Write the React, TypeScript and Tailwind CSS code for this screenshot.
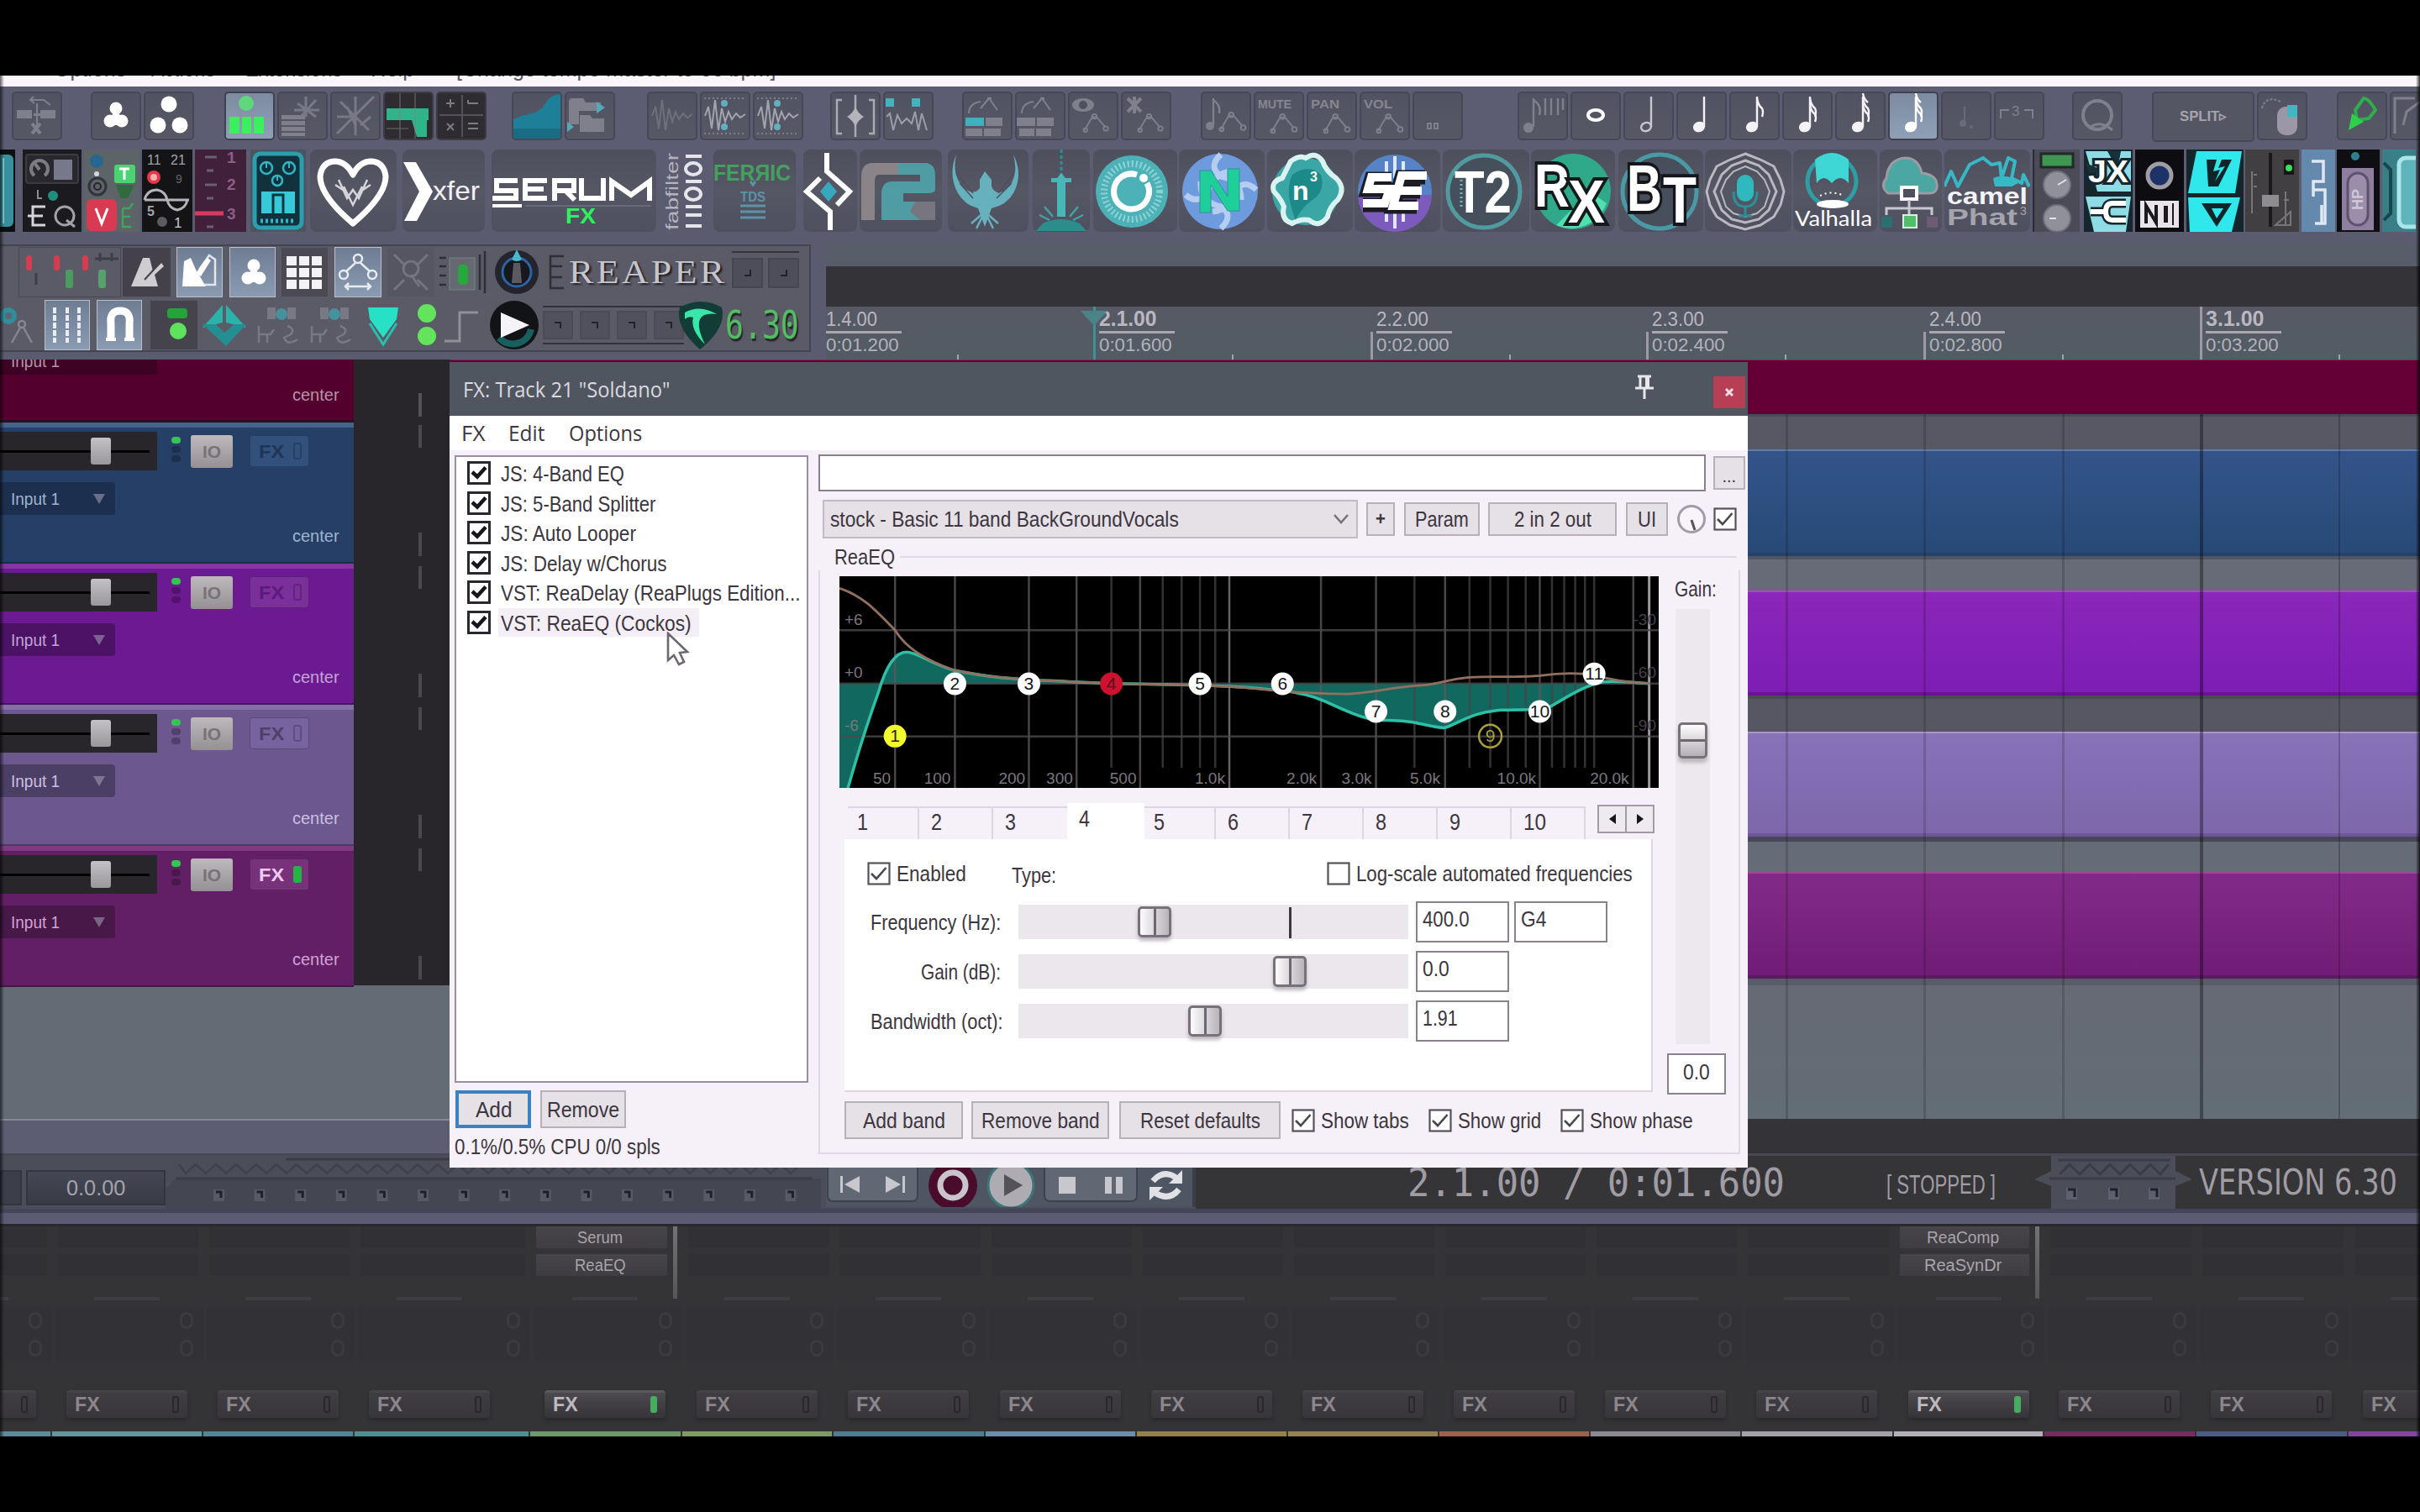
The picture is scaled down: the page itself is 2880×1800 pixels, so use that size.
import { useLayoutEffect, useRef, useState, type ReactNode } from "react";

/* Text squeezed or stretched horizontally to an exact width. */
function Fit({ w, c = "", children }: { w: number; c?: string; children: ReactNode }) {
  const ref = useRef<HTMLSpanElement>(null);
  const [s, setS] = useState(1);
  useLayoutEffect(() => {
    if (ref.current) setS(w / ref.current.offsetWidth);
  }, [w]);
  return (
    <span className={"inline-flex shrink-0 items-center " + c} style={{ width: w }}>
      <span ref={ref} className="inline-block origin-left whitespace-nowrap" style={{ transform: `scaleX(${s})` }}>
        {children}
      </span>
    </span>
  );
}

/* ---------- top toolbar ---------- */
function B({ on, dark, c = "w-[60px]", children }: { on?: boolean; dark?: boolean; c?: string; children?: ReactNode }) {
  const bg = on
    ? "bg-linear-to-b from-[#7d8ba0] to-[#8fa0b6] border-[#3f4350]"
    : dark
      ? "bg-[#2f2c31] border-[#3d3b45]"
      : "bg-linear-to-b from-[#525362] to-[#575866] border-[#474857]";
  return (
    <div className={"flex h-[58px] shrink-0 items-center justify-center overflow-hidden rounded-[5px] border-2 " + bg + " " + c}>
      <svg width="56" height="54" viewBox="2 2 56 54" className="shrink-0" fill="none">
        {children}
      </svg>
    </div>
  );
}
const G = ({ c, children }: { c: string; children: ReactNode }) => <div className={"flex shrink-0 gap-[3px] " + c}>{children}</div>;
const D = "#7f808b";
const Env = ({ x = 18, y = 26, s = 1 }) => (
  <g transform={`translate(${x} ${y}) scale(${s})`} stroke={D} strokeWidth="2">
    <path d="M2 22L12 5L18 5L29 18" />
    <circle cx="15" cy="4" r="3" />
    <circle cx="3" cy="22" r="2.5" />
    <circle cx="30" cy="20" r="3" />
  </g>
);
const Wave = ({ dot }: { dot?: boolean }) => (
  <g stroke={dot ? "#a3a4ad" : "#6f707c"} strokeWidth="2">
    <path d="M6 29L10 18L14 44L18 10L22 46L26 20L30 36L34 24L38 33L43 26L48 31L54 27" />
    {dot && <path d="M5 8H55M5 50H55" strokeDasharray="2 3" opacity=".5" />}
    {dot && <circle cx="29" cy="14" r="4" fill="#5fb0c0" stroke="none" />}
    {dot && <circle cx="29" cy="42" r="4" fill="#5fb0c0" stroke="none" />}
  </g>
);
const Note = ({ flags = 0, open, col = "#f4f2f6" }: { flags?: number; open?: boolean; col?: string }) => (
  <g stroke={col} strokeWidth="2.4">
    <path d="M33 6V42" />
    <ellipse cx="27" cy="42" rx="6" ry="5" fill={open ? "none" : col} transform="rotate(-20 27 42)" />
    {flags > 0 && <path d="M33 8Q34 16 39 20Q41 24 39 30" />}
    {flags > 1 && <path d="M33 16Q34 23 39 27Q41 31 39 36" />}
    {flags > 2 && <path d="M33 2Q34 9 39 13" />}
  </g>
);
const Club = () => (
  <g fill="#fff">
    <circle cx="30" cy="20" r="7.5" />
    <circle cx="23" cy="35" r="7.5" />
    <circle cx="37" cy="35" r="7.5" />
    <path d="M30 18L40 40H20Z" />
  </g>
);
function Lbl({ t }: { t: string }) {
  return (
    <text x="5" y="20" fontSize="15" fontFamily="Liberation Sans" fill="#85868f" fontWeight="bold" textLength={t === "MUTE" ? 40 : 34} lengthAdjust="spacingAndGlyphs">
      {t}
    </text>
  );
}

function TopToolbar() {
  return (
    <div className="flex h-[70px] shrink-0 overflow-hidden bg-[#5c5d73] pt-[6px]">
      <G c="ml-[14px]">
        <B>
          <g stroke={D} strokeWidth="2"><path d="M22 10H38L46 16M26 6L22 10L27 14M30 14V44" /></g>
          <path fill={D} d="M6 22h18v10H6zM34 22h18v10H34zM26 26h8v3h-8z" />
          <path stroke={D} strokeWidth="4" d="M24 38L34 50M34 38L24 50" />
        </B>
      </G>
      <G c="ml-[34px]">
        <B><Club /></B>
        <B><g fill="#fff"><circle cx="30" cy="15" r="9.5" /><circle cx="17" cy="40" r="9.5" /><circle cx="43" cy="40" r="9.5" /></g></B>
      </G>
      <G c="ml-[36px]">
        <B on>
          <circle cx="26" cy="14" r="9" fill="#5fd77c" />
          <path fill="#3bef5e" d="M6 30h12v20H6zM21 30h11v20H21zM35 30h12v20H35z" />
        </B>
        <B>
          <path fill={D} d="M5 28h28v5H5zM5 35h28v5H5zM5 42h28v5H5zM5 49h28v4H5z" />
          <path stroke="#787984" strokeWidth="3" d="M24 14L46 30M46 10L28 30M34 6V30M20 22H50" />
        </B>
        <B><path stroke="#787984" strokeWidth="3" d="M8 50L52 6M12 12L46 46M30 6V52M8 30H24M20 18L30 40M36 40L48 30" /></B>
        <B dark>
          <path fill="#2fb389" d="M4 20h50v14H4zM34 34h18v20H40z" />
          <path stroke="#8b847c" strokeWidth="1.5" d="M20 2V56M38 2V56M4 44H30" opacity=".5" />
        </B>
        <B dark>
          <path stroke="#55525a" strokeWidth="2" d="M4 28H56M31 4V54" />
          <path stroke="#7d7a81" strokeWidth="2" d="M12 14h10M17 9v10M38 14h12M13 38l8 8M21 38l-8 8M38 38h12M38 44h12M38 10v4" />
        </B>
      </G>
      <G c="ml-[30px]">
        <B>
          <path fill="#1d7f98" d="M0 34Q12 28 24 26Q34 24 40 14Q46 3 60 3V60H0Z" />
          <path fill="#186075" d="M0 44H60V60H0Z" opacity=".6" />
        </B>
        <B>
          <path fill={D} d="M5 12q0-4 5-4h12l3 5h18v10H17v16H5zM18 28h12l3 4h14v16H18z" />
          <path fill="#55a8b8" d="M38 12l10 7l-10 7zM3 36l8 6l-8 6z" />
        </B>
      </G>
      <G c="ml-[38px]"><B><Wave /></B><B><Wave dot /></B><B><Wave dot /></B></G>
      <G c="ml-[32px]">
        <B>
          <path stroke="#aaaab3" strokeWidth="2.5" d="M14 10H8V50H14M46 10H52V50H46M30 4V54" />
          <path fill="#b4b4bc" d="M30 18Q33 26 40 30Q33 34 30 42Q27 34 20 30Q27 26 30 18Z" />
        </B>
        <B>
          <path fill="#45b3bd" d="M3 8h10v10H3zM34 8h10v10H34z" />
          <path stroke="#9c9da6" strokeWidth="2" d="M4 30L8 26L12 46L17 28L22 38L28 32L34 38L38 24L42 46L46 26L52 46" />
        </B>
      </G>
      <G c="ml-[34px]">
        <B>
          <path stroke={D} strokeWidth="2" d="M8 26Q8 14 22 12M22 20L32 8L42 22M30 8h5" />
          <path fill="#3fb0be" d="M4 31h22v10H4z" />
          <path fill={D} d="M28 31h20v10H28zM4 44h20v9H4zM26 44h20v9H26z" />
        </B>
        <B>
          <path stroke={D} strokeWidth="2" d="M8 26Q8 14 22 12M22 20L32 8L42 22M30 8h5" />
          <path fill={D} d="M2 31h22v10H2zM26 31h20v10H26zM5 44h18v9H5zM25 44h18v9H25z" />
        </B>
        <B>
          <ellipse cx="18" cy="16" rx="13" ry="8" fill={D} /><circle cx="18" cy="16" r="5" fill="#4f505e" />
          <Env x={18} y={26} s={0.9} />
        </B>
        <B><path stroke={D} strokeWidth="4" d="M8 8L24 24M24 8L8 24M16 6V26" /><Env x={20} y={26} s={0.9} /></B>
      </G>
      <G c="ml-[35px]">
        <B><path stroke={D} strokeWidth="2.4" d="M15 8V40M15 10Q24 16 22 26" /><circle cx="11" cy="41" r="5" fill={D} /><Env x={22} y={24} s={0.95} /></B>
        <B><Lbl t="MUTE" /><Env x={20} y={26} s={0.95} /></B>
        <B><Lbl t="PAN" /><Env x={20} y={26} s={0.95} /></B>
        <B><Lbl t="VOL" /><Env x={20} y={26} s={0.95} /></B>
        <B><path stroke={D} strokeWidth="2" d="M18 38h4v6h-4zM26 38h4v6h-4z" /></B>
      </G>
      <G c="ml-[65px]">
        <B><path stroke={D} strokeWidth="2.4" d="M19 8V42M19 10Q29 16 26 28M33 8V28M40 8V28M48 8V28M54 8V22" /><circle cx="13" cy="43" r="6" fill={D} /></B>
        <B><ellipse cx="30" cy="28" rx="9" ry="6" stroke="#fff" strokeWidth="4" /></B>
        <B><Note open col="#c8c7cf" /></B>
        <B><Note /></B>
        <B><Note flags={1} /></B>
        <B><Note flags={2} /></B>
        <B><Note flags={3} /></B>
        <B on><Note flags={3} col="#fff" /></B>
        <B><path stroke="#6a6b77" strokeWidth="2" d="M28 18V38" /><circle cx="26" cy="38" r="4" fill="#6a6b77" /><circle cx="36" cy="42" r="2" fill="#6a6b77" /></B>
        <B>
          <path stroke={D} strokeWidth="2" d="M8 32V22H18M36 22H46V32" />
          <text x="21" y="29" fontSize="17" fontFamily="Liberation Sans" fill={D}>3</text>
        </B>
      </G>
      <G c="ml-[33px]">
        <B><circle cx="30" cy="28" r="17" stroke={D} strokeWidth="4" /><path stroke={D} strokeWidth="3" d="M22 42Q34 34 48 46" /></B>
      </G>
      <G c="ml-[35px]">
        <div className="flex h-[60px] w-[122px] items-center justify-center rounded-[5px] border-2 border-[#474857] bg-[#555664] text-[17px] font-bold text-[#a5a4ae]">
          <Fit w={56} c="font-['Liberation_Sans']">SPLIT▹</Fit>
        </div>
        <B>
          <path stroke={D} strokeWidth="2" strokeDasharray="3 2" d="M6 20Q10 4 28 12" />
          <rect x="24" y="18" width="24" height="34" rx="10" fill="#9b97a5" />
          <path fill="#43b5c2" d="M36 16h12v14H36z" />
        </B>
      </G>
      <G c="ml-[35px]">
        <B><path stroke="#2fae4b" strokeWidth="4" d="M32 8Q38 8 46 22L38 32L24 34L22 22Z" /><path fill="#2fcf4b" d="M14 46L18 26L32 36Z" /></B>
        <B><path stroke={D} strokeWidth="3" d="M6 50V8H30M16 40L20 24L36 12" /></B>
      </G>
    </div>
  );
}

/* ---------- plugin logo bar ---------- */
function P({ c, w, bg = "bg-linear-to-b from-[#4e4f5d] via-[#565765] to-[#4f505f] rounded-[8px]", children }: { c: string; w: number; bg?: string; children?: ReactNode }) {
  return (
    <div className={"h-[98px] shrink-0 overflow-hidden " + bg + " " + c}>
      <svg width={w} height="98" viewBox={`0 0 ${w} 98`} fill="none" fontFamily="Liberation Sans">
        {children}
      </svg>
    </div>
  );
}
const T = "#4fb4ba";

function PluginBar() {
  return (
    <div className="flex h-[118px] shrink-0 overflow-hidden bg-linear-to-b from-[#5c5d73] to-[#5a5b6e] pt-[5px]">
      <P c="w-[18px]" w={18} bg="bg-[#0e0f12]"><rect x="-4" y="6" width="20" height="86" rx="6" fill="#3a8f9e" /><path stroke="#7fd0da" strokeWidth="2" d="M4 10V88" /></P>
      <P c="ml-[9px] w-[70px]" w={70} bg="bg-[#1b1a1e]">
        <rect x="4" y="6" width="62" height="34" rx="3" stroke="#3c3b42" fill="#29282e" strokeWidth="2" />
        <path stroke="#7c7b82" strokeWidth="4" d="M14 31A10 10 0 1 1 26 31M20 24L14 16" />
        <rect x="37" y="12" width="22" height="24" fill="#77798a" />
        <path stroke="#8d8c94" strokeWidth="2" d="M18 48v10h5" /><circle cx="36" cy="55" r="6" fill="#1f8f7d" />
        <path stroke="#d6d4da" strokeWidth="3" d="M27 68H12V90H27M6 79H24" />
        <circle cx="50" cy="79" r="11" stroke="#a3a2a9" strokeWidth="3" /><path stroke="#a3a2a9" strokeWidth="3" d="M52 84L62 92" />
      </P>
      <P c="ml-[3px] w-[66px]" w={66} bg="bg-[#5c6467]">
        <circle cx="15" cy="14" r="8" fill="#27668f" /><circle cx="15" cy="29" r="3" fill="#d5d6da" />
        <circle cx="16" cy="44" r="10" stroke="#33343c" strokeWidth="3" /><circle cx="16" cy="44" r="4" stroke="#25262c" strokeWidth="2" />
        <rect x="36" y="18" width="25" height="22" rx="3" fill="#4ad373" /><path stroke="#fff" strokeWidth="3" d="M42 23h12M48 23v13" />
        <path fill="#2f6b3f" d="M38 42h22l-8 16h-8z" />
        <rect x="3" y="59" width="36" height="38" rx="6" fill="#d93a51" /><path stroke="#fff" strokeWidth="3" d="M14 70L21 88L28 70" />
        <path stroke="#3ea65a" strokeWidth="2.4" d="M46 70V92H56M46 80h9M46 70h8l4-6" />
      </P>
      <P c="ml-[3px] w-[60px]" w={60} bg="bg-[#141316]">
        <text x="6" y="18" fontSize="16" fill="#a3a2a8">11</text><text x="34" y="18" fontSize="16" fill="#a3a2a8">21</text>
        <circle cx="14" cy="33" r="8" fill="#e5384a" /><circle cx="14" cy="33" r="4" fill="#ffb0b0" />
        <text x="40" y="40" fontSize="14" fill="#66656c">9</text>
        <path stroke="#b4b3b9" strokeWidth="3" d="M3 60Q6 48 18 48Q28 50 30 60Q32 70 42 72Q52 70 54 60M3 60H56" />
        <text x="6" y="79" fontSize="16" fontWeight="bold" fill="#a3a2a8">5</text><circle cx="24" cy="86" r="6" fill="#5c5b62" /><text x="38" y="93" fontSize="17" fill="#cbcad0">1</text>
      </P>
      <P c="ml-[3px] w-[61px]" w={61} bg="bg-[#40203a]">
        <path stroke="#6b5f70" strokeWidth="3" d="M12 9H26M14 25H22M12 42H26M14 58H22M14 92H22" />
        <path stroke="#d53a60" strokeWidth="5" d="M0 76H34" />
        <g fill="#8d5f86" fontSize="19" fontWeight="bold"><text x="38" y="16">1</text><text x="38" y="48">2</text><text x="38" y="83">3</text></g>
      </P>
      <P c="ml-[5px] w-[66px]" w={66} bg="bg-[#4a5560]">
        <rect x="5" y="5" width="56" height="88" rx="7" fill="#11323d" stroke="#2b9fae" strokeWidth="5" />
        <g stroke="#31b6c6" strokeWidth="2.5"><circle cx="19" cy="22" r="7" /><circle cx="46" cy="22" r="7" /><circle cx="32" cy="37" r="6" /></g>
        <path stroke="#31b6c6" strokeWidth="2" d="M19 22V16M46 22V16M32 37V31" />
        <rect x="13" y="50" width="40" height="26" fill="#38c8d8" /><rect x="27" y="54" width="12" height="26" stroke="#0c3540" strokeWidth="3" />
        <path stroke="#31b6c6" strokeWidth="5" strokeDasharray="3 3" d="M12 85H54" />
      </P>
      <P c="ml-[5px] w-[103px]" w={103}>
        <path stroke="#fff" strokeWidth="7" strokeLinejoin="round" d="M51 88Q12 55 12 32Q14 15 29 14Q43 14 51 30Q59 14 73 14Q88 15 90 32Q90 55 51 88Z" />
        <path stroke="#d5d4da" strokeWidth="2.5" d="M34 36L44 58L51 48L58 58L68 36M40 44L51 66L62 44M30 42L42 50M72 42L60 50" />
      </P>
      <P c="ml-[7px] w-[98px]" w={98}>
        <path fill="#fff" d="M1 15H16L36 50L17 85H2L20 50Z" />
        <text x="36" y="60" fontSize="32" fill="#f2f1f5" textLength="56" lengthAdjust="spacingAndGlyphs">xfer</text>
      </P>
      <P c="ml-[8px] w-[196px]" w={196}>
        <g stroke="#fff" strokeWidth="6">
          <path d="M31 37H6V49H29V58H1M66 37H40V58H66M42 47H62M75 61V37H98V49H76M88 49L99 60M107 34V58H133V34M143 61V38L166 54L188 38V61" />
        </g>
        <path stroke="#fff" strokeWidth="4" d="M1 67H36" /><path stroke="#77778a" strokeWidth="2" d="M40 67H190" opacity=".6" />
        <text x="88" y="88" fontSize="26" fontWeight="bold" fill="#2df05c" textLength="36" lengthAdjust="spacingAndGlyphs">FX</text>
      </P>
      <P c="ml-[6px] w-[56px]" w={56} bg="">
        <text transform="translate(20 96) rotate(-90)" fontSize="20" fill="#b5b4be" textLength="92" lengthAdjust="spacingAndGlyphs">fabfilter</text>
        <g stroke="#e6e5ea" strokeWidth="4"><path d="M29 8H48M29 38H48M29 68H48M29 91H48" /><ellipse cx="38" cy="23" rx="9" ry="7" /><ellipse cx="38" cy="53" rx="9" ry="7" /><path d="M29 78H48" /></g>
      </P>
      <P c="ml-[6px] w-[98px]" w={98}>
        <text x="0" y="37" fontSize="27" fontWeight="bold" fill="#45a05f" textLength="92" lengthAdjust="spacingAndGlyphs">FERЯIC</text>
        <text x="32" y="62" fontSize="17" fontWeight="bold" fill="#5c93a6" textLength="30" lengthAdjust="spacingAndGlyphs">TDS</text>
        <path stroke="#5c93a6" strokeWidth="3" d="M32 67H62M32 74H62M32 81H62M44 38l3 4l3-4" />
      </P>
      <P c="ml-[9px] w-[64px]" w={64}>
        <path stroke="#fff" strokeWidth="6" d="M28 4V26L55 50L40 66M32 96V74L4 50L20 34" />
        <path fill="#38a8bf" d="M30 38L40 50L30 62L20 50Z" />
      </P>
      <P c="ml-[3px] w-[98px]" w={98}>
        <path fill="#8a8488" d="M2 84V32Q2 16 16 16H46V30H22Q18 30 18 40V84Z" />
        <path fill={T} d="M46 16H80Q90 18 90 30V48Q90 52 80 52H52V62H90V84H26V50Q28 38 38 38H72V30H46Z" opacity=".75" />
        <path fill="#77757e" d="M66 62H90V84H72L60 74Z" />
      </P>
      <P c="ml-[7px] w-[96px]" w={96}>
        <path fill="#66b1bd" d="M10 6Q0 30 12 52Q20 66 36 70L44 92L52 70Q70 66 78 52Q90 30 78 6Q86 36 66 50Q56 54 52 44V36L44 26L38 36V46Q32 54 22 48Q4 34 10 6Z" />
        <path stroke="#4e4f5d" strokeWidth="1.5" d="M14 40L30 58M10 28L30 52M76 40L58 58M79 28L60 52" />
        <path stroke="#66b1bd" strokeWidth="2.5" d="M44 74L28 88M44 74L60 88M44 74L34 94M44 74L54 94" />
      </P>
      <P c="ml-[5px] w-[68px]" w={68}>
        <path stroke="#2f8f94" strokeWidth="3" strokeDasharray="4 3" d="M34 0V30" />
        <path fill="#49b6b8" d="M29 34L34 28L39 34V80H29ZM22 34H46V39H22Z" />
        <path fill="#2d8d8d" d="M4 97L12 88Q34 78 56 88L64 97Z" />
        <path stroke="#3fa3a6" strokeWidth="2.5" d="M8 78L20 84M14 68L24 80M60 78L48 84M54 68L44 80" />
      </P>
      <P c="ml-[4px] w-[100px]" w={100}>
        <circle cx="46" cy="50" r="43" fill="#4db2b8" />
        <circle cx="46" cy="50" r="33" stroke="#8fd3d5" strokeWidth="8" strokeDasharray="2 3" />
        <circle cx="46" cy="50" r="26" fill="#4db2b8" />
        <path stroke="#fff" strokeWidth="7" d="M52 30A21 21 0 1 0 64 40" /><circle cx="60" cy="34" r="5" fill="#fff" />
      </P>
      <P c="ml-[2px] w-[102px]" w={102}>
        <circle cx="49" cy="50" r="45" fill="#6d9bdd" />
        <path stroke="#b6cdf2" strokeWidth="7" d="M50 6Q34 20 50 32Q74 36 74 60M92 48Q78 34 66 50Q60 72 40 74M50 94Q66 78 50 68Q24 62 26 38M8 54Q22 66 34 52Q40 30 60 26" />
        <path fill="#1fcf9a" stroke="#2d8f9c" strokeWidth="1" d="M25 75V25H38L58 56V23H72V73H58L38 42V75Z" />
      </P>
      <P c="ml-[3px] w-[102px]" w={102}>
        <circle cx="46" cy="50" r="40" fill="#3aa6a6" />
        <path stroke="#d9f3f1" strokeWidth="6" d="M46 10Q58 2 66 14Q70 26 82 34Q94 46 84 60Q74 68 72 80Q62 94 50 84Q40 82 30 88Q16 84 20 68Q16 58 8 50Q4 38 18 34Q24 22 28 14Q38 6 46 10Z" />
        <path fill="#1d8a8a" d="M30 30Q50 16 64 30Q70 50 54 60Q40 70 34 84Q20 50 30 30Z" />
        <text x="30" y="60" fontSize="32" fontWeight="bold" fill="#fff">n</text><text x="51" y="38" fontSize="16" fontWeight="bold" fill="#fff">3</text>
      </P>
      <P c="ml-[2px] w-[102px]" w={102}>
        <circle cx="48" cy="50" r="44" fill="#5583c6" /><path fill="#7d5bbd" d="M4 54A44 44 0 0 0 92 54Z" />
        <path stroke="#dfe8f7" strokeWidth="4" d="M38 14V34M48 8V34M58 14V34M38 70V86M48 70V94M58 70V86" />
        <path stroke="#1b1b24" strokeWidth="17" d="M44 35H20L16 48H42L36 66H10M84 33H56L46 68H74M52 50H78" />
        <path stroke="#fff" strokeWidth="10" d="M44 33H20L16 47H42L36 64H10M86 31H56L46 67H76M52 49H80" />
      </P>
      <P c="ml-[3px] w-[103px]" w={103}>
        <circle cx="49" cy="50" r="43" stroke="#519aa0" strokeWidth="5" fill="#45505c" />
        <path stroke="#6fb9bc" strokeWidth="3" strokeDasharray="2 3" d="M22 36V70" />
        <text x="14" y="75" fontSize="70" fontWeight="bold" fill="#fff" textLength="68" lengthAdjust="spacingAndGlyphs">T2</text>
      </P>
      <P c="ml-[2px] w-[100px]" w={100}>
        <circle cx="50" cy="50" r="45" fill="#2fa98a" /><path fill="#4fe0ae" d="M30 90A45 45 0 0 0 90 64L70 50Z" />
        <g fontWeight="bold" fontSize="72" fill="#fff" stroke="#141a1c" strokeWidth="8" paintOrder="stroke">
          <text x="4" y="68" textLength="42" lengthAdjust="spacingAndGlyphs">R</text>
          <text x="44" y="87" textLength="44" lengthAdjust="spacingAndGlyphs">X</text>
        </g>
      </P>
      <P c="ml-[4px] w-[101px]" w={101}>
        <circle cx="49" cy="50" r="44" stroke="#4a9aa6" strokeWidth="5" fill="#464f5b" />
        <g fontWeight="bold" fontSize="78" fill="#fff" stroke="#15161b" strokeWidth="8" paintOrder="stroke">
          <text x="10" y="73" textLength="42" lengthAdjust="spacingAndGlyphs">B</text>
          <text x="53" y="87" textLength="40" lengthAdjust="spacingAndGlyphs">T</text>
        </g>
      </P>
      <P c="ml-[2px] w-[103px]" w={103}>
        <g stroke="#b9b8c1" strokeWidth="3">
          <path d="M48 5L66 12L82 20L90 36L94 50L90 66L82 80L66 90L48 95L30 90L14 80L6 66L2 50L6 36L14 20L30 12Z" />
          <path d="M48 13L64 19L76 30L85 50L76 72L64 83L48 87L32 83L20 72L11 50L20 30L32 19Z" />
          <path strokeWidth="2" d="M48 20L62 26L71 36L77 50L71 68L62 76L48 80L34 76L25 68L19 50L25 36L34 26Z" />
        </g>
        <rect x="38" y="30" width="20" height="32" rx="10" fill="#2fb9bf" /><path stroke="#2b8f98" strokeWidth="3" d="M34 50Q34 68 48 68Q62 68 62 50M48 68V78M40 79H56" />
      </P>
      <P c="ml-[2px] w-[100px]" w={100}>
        <circle cx="46" cy="38" r="29" stroke="#2f9ea4" strokeWidth="5" />
        <path fill="#3fd6d6" d="M26 12Q46 -4 66 12L66 40Q56 28 46 40Q36 28 28 40Z" />
        <path stroke="#fff" strokeWidth="2" strokeDasharray="2 4" d="M32 55Q46 48 60 55" /><ellipse cx="47" cy="65" rx="19" ry="5" fill="#fff" />
        <text x="2" y="91" fontSize="25" fill="#fff" fontFamily="Lato" textLength="92" lengthAdjust="spacingAndGlyphs">Valhalla</text>
      </P>
      <P c="ml-[3px] w-[74px]" w={74}>
        <path fill="#4aa7a2" stroke="#9a9ba3" strokeWidth="3" d="M10 52Q0 44 8 34Q10 12 30 10Q46 10 50 28Q70 30 68 46Q66 52 60 52Z" />
        <rect x="26" y="45" width="18" height="14" fill="#4f505e" stroke="#fff" strokeWidth="4" />
        <path stroke="#c9c8cf" strokeWidth="3" d="M35 60V80M8 78V70H62V78" />
        <rect x="2" y="80" width="13" height="13" fill="#2b6f70" /><rect x="28" y="78" width="16" height="15" fill="#4fbf6a" stroke="#d9f0dd" strokeWidth="2" /><rect x="56" y="80" width="13" height="13" fill="#6b5c74" />
      </P>
      <P c="ml-[3px] w-[102px]" w={102}>
        <path stroke="#37b8c6" strokeWidth="4" strokeLinejoin="round" d="M0 44L8 26L16 44L30 18L46 10L56 18L66 16L68 34L76 10L84 14L80 34L92 40L94 30L101 44" />
        <path fill="#37b8c6" d="M58 34Q72 28 92 38L80 44H60Z" />
        <text x="3" y="65" fontSize="27" fontWeight="bold" fill="#f3f2f6" textLength="96" lengthAdjust="spacingAndGlyphs">camel</text>
        <text x="3" y="90" fontSize="27" fontWeight="bold" fill="#a5a4ad" textLength="84" lengthAdjust="spacingAndGlyphs">Phat</text>
        <text x="90" y="78" fontSize="14" fill="#a5a4ad">3</text>
      </P>
      <P c="ml-[3px] w-[56px]" w={56} bg="bg-[#4a4b57] border-l-2 border-[#2b2b33]">
        <rect x="8" y="5" width="38" height="16" fill="#3f9650" stroke="#24272b" strokeWidth="3" />
        <g fill="#8f9099" stroke="#6f707a" strokeWidth="2"><circle cx="27" cy="42" r="16" /><circle cx="27" cy="82" r="16" /></g>
        <path stroke="#e2e2e6" strokeWidth="2" d="M28 42L38 36M18 82H26" />
      </P>
      <P c="ml-[5px] w-[58px]" w={58} bg="bg-[#15262d]">
        <path fill="#8edbe6" d="M2 2H56V50H16ZM2 56H56L50 98H12Z" /><path fill="#17303a" d="M28 2L40 24L44 2ZM2 16L14 48L16 22Z" />
        <text x="5" y="39" fontSize="36" fontWeight="bold" fill="#fff" stroke="#15262d" strokeWidth="6" paintOrder="stroke" textLength="48" lengthAdjust="spacingAndGlyphs">JX</text>
        <path stroke="#15262d" strokeWidth="11" d="M8 74H24M50 64H34Q26 64 26 74Q26 84 34 84H50" /><path stroke="#fff" strokeWidth="6" d="M8 74H24M50 64H34Q26 64 26 74Q26 84 34 84H50" />
      </P>
      <P c="ml-[3px] w-[58px]" w={58} bg="bg-[#0d0c10]">
        <circle cx="29" cy="31" r="14" fill="#1d3267" stroke="#a09da4" strokeWidth="5" />
        <rect x="6" y="61" width="46" height="32" fill="#e9e4ea" /><path stroke="#1a191d" strokeWidth="4" d="M13 88V67L25 87V66" /><rect x="34" y="67" width="5" height="20" fill="#1a191d" /><path stroke="#1a191d" strokeWidth="2" d="M45 64V90" />
      </P>
      <P c="ml-[3px] w-[68px]" w={68} bg="bg-[#12262c]">
        <path fill="#30e8ec" d="M12 2H66L58 52H2ZM2 57H64L54 98H4Z" />
        <path fill="#0f2529" d="M24 12H54L38 44H26Z" /><path fill="#30e8ec" d="M36 12L32 26L40 24L34 38L46 20L38 22L42 12Z" />
        <path fill="#0f2529" d="M18 64H54L36 92Z" /><path fill="#30e8ec" d="M30 70H44L36 82Z" />
      </P>
      <P c="ml-[2px] w-[64px]" w={64} bg="bg-[#423f42]">
        <path stroke="#1a191b" strokeWidth="4" d="M30 4V92" /><path stroke="#77747a" strokeWidth="2" d="M8 26V76M14 30H10M14 44H10M48 50V90M52 60H46" />
        <rect x="20" y="54" width="20" height="14" fill="#8f8c91" /><rect x="46" y="12" width="12" height="18" fill="#161518" /><circle cx="52" cy="22" r="4" fill="#3be05c" />
        <path stroke="#77747a" strokeWidth="2" d="M36 90L54 74V90Z" />
      </P>
      <P c="ml-[3px] w-[40px]" w={40} bg="bg-[#6489ac]">
        <path stroke="#dfe8f2" strokeWidth="3.5" d="M12 14H26V38H14V56M14 48H28V88H16M24 66V88" />
      </P>
      <P c="ml-[2px] w-[51px]" w={51} bg="bg-[#0f0f13]">
        <circle cx="22" cy="8" r="5" fill="#2e8090" /><rect x="6" y="22" width="38" height="74" fill="#8d7f9d" />
        <rect x="13" y="28" width="24" height="62" rx="12" stroke="#5d5270" strokeWidth="3" fill="#9a8eaa" />
        <text transform="translate(31 72) rotate(-90)" fontSize="18" fontWeight="bold" fill="#cfc8d8">HP</text>
      </P>
      <P c="ml-[3px] w-[40px]" w={40} bg="bg-[#3a7f88]">
        <path stroke="#15474e" strokeWidth="4" d="M2 16L10 24V76L2 84" /><rect x="20" y="10" width="40" height="82" rx="8" fill="#5fb3bb" stroke="#a9e6ea" strokeWidth="5" />
      </P>
    </div>
  );
}

/* ---------- REAPER panel + ruler ---------- */
function S({ c, w, h = 58, bg = "", children }: { c: string; w: number; h?: number; bg?: string; children?: ReactNode }) {
  return (
    <div className={"shrink-0 overflow-hidden " + bg + " " + c}>
      <svg width={w} height={h} viewBox={`0 0 ${w} ${h}`} fill="none" fontFamily="Liberation Sans">{children}</svg>
    </div>
  );
}
const LIT = "bg-linear-to-b from-[#6f7d93] to-[#8a9bb2] border border-[#b9c0cc]";

function ReaperPanel() {
  return (
    <div className="flex h-[128px] w-[965px] shrink-0 flex-col gap-[3px] border-2 border-l-0 border-[#434452] bg-[#5a5b67] pt-[1px]">
      <div className="flex h-[60px] items-center">
        <S c="ml-[22px] w-[122px]" w={122} bg="border border-[#474857]">
          <g fill="#d63c50"><rect x="8" y="9" width="7" height="18" rx="3" /><rect x="41" y="9" width="7" height="18" rx="3" /><rect x="75" y="9" width="7" height="18" rx="3" /></g>
          <path stroke="#3e3e47" strokeWidth="3" d="M20 30V44M90 13H118M96 6V16M110 6V16" />
          <rect x="55" y="26" width="9" height="22" rx="3" fill="#4b9a61" /><rect x="94" y="26" width="9" height="22" rx="3" fill="#58a06a" />
        </S>
        <S c="ml-[2px] w-[57px]" w={57} bg="bg-[#45414a]"><path fill="#cfccd2" d="M10 46L24 12H32L36 28L46 18L49 22L38 32L42 46Z" /><path stroke="#45414a" strokeWidth="2" d="M26 38L46 16" /></S>
        <S c={"ml-[7px] w-[55px]"} w={55} bg={LIT}><path fill="#fff" d="M8 16L16 12L22 26L34 46H6Z" /><path stroke="#e2e6ee" strokeWidth="2.5" d="M26 26L38 9L45 14V44H32" /><path fill="#fff" d="M22 30L36 12L40 15L28 34Z" /></S>
        <S c="ml-[8px] w-[55px]" w={55} bg={LIT}><g transform="translate(-2 1)"><Club /></g></S>
        <S c="ml-[7px] w-[55px]" w={55} bg="bg-[#4b4951]"><path fill="#f4f2f6" d="M6 10h12v11H6zM21 10h12v11H21zM36 10h12v11H36zM6 24h12v11H6zM21 24h12v11H21zM36 24h12v11H36zM6 38h12v11H6zM21 38h12v11H21zM36 38h12v11H36z" /></S>
        <S c="ml-[8px] w-[56px]" w={56} bg={LIT}>
          <g stroke="#e7ebf2" strokeWidth="2.5"><circle cx="27" cy="13" r="5" /><circle cx="10" cy="32" r="5" /><circle cx="44" cy="32" r="5" /><path d="M24 18L13 28M30 18L41 28M12 46H42M16 42L12 46L16 50M38 42L42 46L38 50" /></g>
        </S>
        <S c="ml-[7px] w-[56px]" w={56} bg="bg-[#555662]"><path stroke="#74747f" strokeWidth="3" d="M8 8L20 20M48 8L36 20M8 50L20 38M48 50L36 38M28 32L38 46" /><circle cx="28" cy="25" r="9" stroke="#74747f" strokeWidth="3" /></S>
        <S c="ml-[4px] w-[66px]" w={66}>
          <path stroke="#2e2e37" strokeWidth="2.5" d="M2 12H10M2 22H10M2 33H10M2 44H10M56 4V54M50 8V50" />
          <rect x="14" y="12" width="30" height="38" fill="#646a6f" stroke="#7d7e88" /><rect x="24" y="20" width="12" height="24" rx="5" fill="#25a83c" />
        </S>
        <S c="w-[56px]" w={56}><circle cx="28" cy="29" r="26" fill="#23242c" /><circle cx="28" cy="29" r="17" stroke="#2d62a5" strokeWidth="3" fill="#17181e" /><path fill="#49b8ca" d="M28 2L34 14Q28 18 22 14Z" /><path fill="#5b5a60" d="M24 18H32L34 42H22Z" /></S>
        <S c="ml-[8px] w-[26px]" w={26}><path stroke="#2e2e37" strokeWidth="2.5" d="M20 10H4V48H20M4 22H18M4 35H18" /></S>
        <Fit w={188} c="font-['Liberation_Serif'] text-[40px] tracking-[3px] text-[#c6c5cb] [text-shadow:2px_2px_2px_#1c1c22]">REAPER</Fit>
        <div className="ml-[6px] flex h-[50px] w-[80px] flex-col gap-[6px] border-t-2 border-[#34343d]">
          <div className="mt-[6px] flex gap-[6px]">
            {[0, 1].map((i) => (
              <div key={i} className="flex h-[36px] w-[37px] items-center justify-center border-2 border-[#454651] bg-[#4d4e59]"><i className="size-[8px] border-r-2 border-b-2 border-[#22222a]" /></div>
            ))}
          </div>
        </div>
      </div>
      <div className="flex h-[60px] items-center">
        <S c="w-[50px]" w={50}><circle cx="10" cy="18" r="10" fill="#2f8d9c" /><circle cx="10" cy="18" r="4" fill="#5c6672" /><g stroke="#85868f" strokeWidth="2.5"><circle cx="26" cy="28" r="4" /><path d="M24 32L14 50M28 32L38 50" /></g></S>
        <S c="ml-[3px] w-[54px]" w={54} bg={LIT}><path stroke="#e9edf3" strokeWidth="4" strokeDasharray="7 2" d="M11 8V50M26 8V50M40 8V50" /></S>
        <S c="ml-[8px] w-[54px]" w={54} bg={LIT}><path stroke="#fff" strokeWidth="9" d="M16 46V28Q14 12 27 12Q40 12 38 28V46" /><path stroke="#fff" strokeWidth="4" d="M10 46H22M32 46H44" /></S>
        <S c="ml-[10px] w-[56px]" w={56} bg="bg-[#45444c]"><rect x="20" y="9" width="24" height="12" rx="4" fill="#23a33a" /><circle cx="33" cy="36" r="10" fill="#5fe35c" /></S>
        <S c="ml-[4px] w-[60px]" w={60}><path fill="#2bb2ab" d="M26 5V26L2 32ZM30 5V26L54 32Z" /><path fill="#238f92" d="M2 28L18 28L28 38L40 28H54L30 54Z" /></S>
        {[0, 1].map((i) => (
          <S key={i} c="ml-[3px] w-[60px]" w={60}>
            <path fill="#787984" d="M16 8h10v14H16zM40 8h10v14H40z" /><circle cx="33" cy="16" r="7" fill="#45919c" />
            <path stroke="#787984" strokeWidth="2.5" d="M6 30V50M6 40H20L24 34M16 40V50M40 30Q50 34 44 40L36 44Q40 54 52 46" />
          </S>
        ))}
        <S c="ml-[1px] w-[60px]" w={60}><path fill="#27e0c6" d="M12 8H48L46 22L30 44L14 22Z" /><path stroke="#27c0b0" strokeWidth="3" d="M14 27L30 52L46 27" /></S>
        <S c="ml-[6px] w-[30px]" w={30}><circle cx="16" cy="15" r="11" fill="#63e45c" /><circle cx="16" cy="42" r="11" fill="#63e45c" /></S>
        <S c="ml-[3px] w-[48px]" w={48}><path stroke="#8f9099" strokeWidth="3" d="M4 48H22V14H44" /></S>
        <S c="ml-[7px] w-[64px]" w={64}><circle cx="32" cy="29" r="29" fill="#111317" /><path stroke="#17605f" strokeWidth="8" d="M14 44A22 22 0 0 0 52 34" /><path fill="#f5f3f7" d="M16 14L50 29L16 44Z" /></S>
        <div className="ml-[2px] flex h-[46px] w-[168px] items-center gap-[8px] border-y-2 border-[#30303a]">
          {[0, 1, 2, 3].map((i) => (
            <div key={i} className="flex h-[34px] w-[36px] items-center justify-center border-2 border-[#4a4b56] bg-[#50515d]"><i className="size-[8px] border-t-2 border-r-2 border-[#22222a]" /></div>
          ))}
        </div>
        <S c="-ml-[7px] w-[54px]" w={54}><path fill="#123c36" d="M2 8Q27 -6 52 8Q58 32 26 58Q-4 32 2 8Z" /><path fill="#37e8a8" d="M8 14Q26 4 46 16Q30 14 26 22Q22 32 32 52Q14 34 18 20Q12 18 8 22Z" /></S>
        <Fit w={88} c="ml-[2px] font-['DejaVu_Sans_Mono'] text-[46px] leading-[58px] text-[#53bd64] [text-shadow:2px_3px_1px_#26262c]">6.30</Fit>
      </div>
    </div>
  );
}

const RULER = [
  { a: "1.4.00", b: "0:01.200", w: "w-[318px]", tick: "", aw: 61 },
  { a: "2.1.00", b: "0:01.600", w: "w-[330px]", tick: "bg-[#3f9292] h-[63px]", aw: 69, bold: true },
  { a: "2.2.00", b: "0:02.000", w: "w-[328px]", tick: "bg-[#9d9aa6] h-[33px]", aw: 62 },
  { a: "2.3.00", b: "0:02.400", w: "w-[330px]", tick: "bg-[#9d9aa6] h-[33px]", aw: 62 },
  { a: "2.4.00", b: "0:02.800", w: "w-[329px]", tick: "bg-[#9d9aa6] h-[33px]", aw: 62 },
  { a: "3.1.00", b: "0:03.200", w: "w-[262px]", tick: "bg-[#9d9aa6] h-[63px]", aw: 70, bold: true },
];
function Ruler() {
  return (
    <div className="ml-[18px] flex min-w-0 flex-1 flex-col">
      <div className="h-[26px] bg-[#575d69]" />
      <div className="h-[48px] bg-[#343337]" />
      <div className="flex h-[63px] overflow-hidden bg-linear-to-b from-[#575965] to-[#515c63]">
        {RULER.map((r, i) => (
          <div key={r.a} className={"relative flex shrink-0 items-end " + r.w}>
            <div className={"w-[3px] shrink-0 " + r.tick + (i === 0 ? " hidden" : "")} />
            <div className={"flex h-[63px] flex-col " + (i ? "ml-[4px]" : "")}>
              <Fit w={r.aw} c={"mt-[3px] h-[24px] font-['Liberation_Sans'] text-[#bab7c1] " + (r.bold ? "text-[25px] font-bold" : "text-[23px]")}>{r.a}</Fit>
              <div className="mt-[2px] h-[3px] w-[90px] bg-[#aaa7b3]" />
              <Fit w={87} c="mt-[1px] h-[24px] font-['Liberation_Sans'] text-[22px] text-[#b4b1bc]">{r.b}</Fit>
            </div>
            <i className={"absolute bottom-0 h-[6px] w-[2px] bg-[#a5a2ad] " + (i ? "left-[165px]" : "left-[156px]")} />
            {i === 1 && <svg className="absolute top-[5px] -left-[15px]" width="32" height="18"><path fill="#4a8488" d="M0 0H32L16 18Z" /></svg>}
          </div>
        ))}
      </div>
    </div>
  );
}

/* ---------- tracks ---------- */
const TRACKS = [
  { bg: "bg-[#263f66]", hi: "border-[#45628a]", sel: "bg-[#1d2f4e]", fx: "bg-[#31507c] text-[#1f3557]", tx: "text-[#9fb4d0]", on: false },
  { bg: "bg-[#6c1a91]", hi: "border-[#8437a4]", sel: "bg-[#4b1266]", fx: "bg-[#7b2f9a] text-[#5c1a7a]", tx: "text-[#c5a2d8]", on: false },
  { bg: "bg-[#6c578e]", hi: "border-[#8570a5]", sel: "bg-[#4c3f66]", fx: "bg-[#7763a0] text-[#4f4068]", tx: "text-[#cbbfe0]", on: false },
  { bg: "bg-[#631f65]", hi: "border-[#7f3a80]", sel: "bg-[#471848]", fx: "bg-[#77327a] text-[#f0c9f2]", tx: "text-[#d2a2d4]", on: true },
];
function TrackPanel() {
  return (
    <div className="flex w-[421px] shrink-0 flex-col">
      <div className="relative h-[75px] shrink-0 overflow-hidden border-b-[3px] border-[#2c0f20] bg-[#53002e]">
        <div className="flex h-[18px] w-[187px] items-end overflow-hidden bg-[#3d0224]">
          <Fit w={58} c="mb-[4px] ml-[13px] h-[24px] text-[20px] text-[#b893a8]">Input 1</Fit>
        </div>
        <div className="mt-[10px] flex h-[28px] items-center justify-end pr-[17px]"><Fit w={56} c="text-[20px] text-[#b893a8]">center</Fit></div>
      </div>
      {TRACKS.map((t, i) => (
        <div key={i} className={"flex h-[168px] shrink-0 flex-col border-t-[6px] border-b-2 border-b-black/30 " + t.bg + " " + t.hi}>
          <div className="mt-[5px] flex h-[46px]">
            <div className="flex h-[46px] w-[187px] items-center bg-[#28262a]">
              <div className="h-[3px] w-[108px] bg-black" />
              <div className="h-[32px] w-[24px] rounded-[3px] bg-linear-to-b from-[#c4c1c4] to-[#9a979a]" />
              <div className="h-[3px] w-[46px] bg-black" />
            </div>
            <div className="ml-[17px] flex w-[11px] flex-col gap-[3px] pt-[6px]">
              <i className="h-[8px] rounded-full bg-[#35c552]" />
              <i className="h-[8px] rounded-full bg-black/25" />
              <i className="h-[8px] rounded-full bg-black/25" />
            </div>
            <div className="mt-[4px] ml-[12px] flex h-[39px] w-[50px] items-center justify-center rounded-[3px] bg-linear-to-b from-[#bdb9bd] to-[#949094] text-[21px] font-bold text-[#767277]">
              <Fit w={22}>IO</Fit>
            </div>
            <div className={"mt-[4px] ml-[20px] flex h-[38px] w-[71px] items-center rounded-[4px] border border-black/25 pl-[10px] font-bold " + t.fx}>
              <Fit w={30} c="text-[22px]">FX</Fit>
              <i className={"ml-[11px] h-[20px] w-[10px] rounded-[3px] " + (t.on ? "bg-[#25b345]" : "border-2 border-black/20")} />
            </div>
          </div>
          <div className={"mt-[14px] flex h-[39px] w-[137px] items-center rounded-r-[4px] pl-[13px] " + t.sel}>
            <Fit w={58} c={"text-[21px] " + t.tx}>Input 1</Fit>
            <svg className="ml-[40px]" width="14" height="12" opacity=".55"><path fill="#a9a2b8" d="M0 0H14L7 12Z" /></svg>
          </div>
          <div className="mt-[11px] flex h-[28px] items-center justify-end pr-[17px]"><Fit w={56} c={"text-[20px] " + t.tx}>center</Fit></div>
        </div>
      ))}
      <div className="h-[158px] bg-[#636b74]" />
    </div>
  );
}

function Arrange() {
  return (
    <div className="flex h-[904px] shrink-0 overflow-hidden bg-[#636b74]">
      <TrackPanel />
      <div className="relative flex h-[745px] w-[115px] shrink-0 flex-col bg-[#28262a]">
        <div className="mt-[40px] ml-[77px] h-[28px] w-[4px] bg-[#55535a]" />
        {TRACKS.map((_, i) => (
          <div key={i} className="flex h-[168px] shrink-0 flex-col pl-[77px]">
            <div className="mt-[10px] h-[27px] w-[4px] bg-[#4b4950]" />
            <div className="mt-[101px] h-[28px] w-[4px] bg-[#4b4950]" />
          </div>
        ))}
      </div>
      <div className="relative flex flex-1 flex-col">
        <div className="h-[65px] border-t border-[#7b3056] bg-[#650036]" />
        <div className="h-[42px] border-t-[3px] border-[#4c4a54] bg-[#585864]" />
        <div className="h-[127px] border-t-2 border-b-4 border-t-[#5c7da8] border-b-[#24426a] bg-linear-to-b from-[#345489] to-[#274a77]" />
        <div className="h-[41px] border-t-[4px] border-[#515562] bg-[#676a77]" />
        <div className="h-[125px] border-t-2 border-b-4 border-t-[#a548cd] border-b-[#6a1294] bg-linear-to-b from-[#8b27ba] to-[#7d1db4]" />
        <div className="h-[43px] border-t-[4px] border-[#4c4a54] bg-[#565763]" />
        <div className="h-[125px] border-t-2 border-b-4 border-t-[#a996cc] border-b-[#6c5798] bg-linear-to-b from-[#8872b8] to-[#7e68ab]" />
        <div className="h-[42px] border-t-[6px] border-[#484759] bg-[#666b78]" />
        <div className="h-[127px] border-t-2 border-b-4 border-t-[#99489b] border-b-[#5d1a63] bg-linear-to-b from-[#832a88] to-[#701d76]" />
        <div className="h-[167px] border-t-[8px] border-[#5a5b68] bg-linear-to-b from-[#666a75] to-[#626d75]" />
        <i className="absolute top-[65px] left-[1589px] h-[839px] w-[3px] bg-black/15" />
        <i className="absolute top-[65px] left-[1753px] h-[839px] w-[3px] bg-black/15" />
        <i className="absolute top-[65px] left-[1918px] h-[839px] w-[3px] bg-black/15" />
        <i className="absolute top-[65px] left-[2082px] h-[839px] w-[4px] bg-black/35" />
        <i className="absolute top-[65px] left-[2247px] h-[839px] w-[2px] bg-black/20" />
      </div>
    </div>
  );
}

/* ---------- transport + mixer ---------- */
function Transport() {
  return (
    <>
      <div className="flex h-[41px] shrink-0">
        <div className="h-full w-[1000px] border-t-2 border-[#858a94] bg-[#5c5d73]" />
        <div className="flex-1 bg-[#343337]" />
      </div>
      <div className="flex h-[71px] shrink-0 border-t-[3px] border-b-[5px] border-t-[#484954] border-b-[#44455a] bg-[#4b4d58]">
        <div className="mt-[17px] h-[42px] w-[26px] border-2 border-[#343541] bg-[#3c3e4a]" />
        <div className="mt-[17px] ml-[5px] flex h-[42px] w-[166px] items-center justify-center border-2 border-[#343541] bg-linear-to-b from-[#454854] to-[#383a46]">
          <Fit w={70} c="text-[26px] text-[#a3a2ad]">0.0.00</Fit>
        </div>
        <svg width="786" height="63" fill="none">
          <path fill="#444651" d="M12 27H780V63H0V40Z" />
          <path stroke="#3b3c48" strokeWidth="3" d="M143 4H770M12 27H770" />
          <path stroke="#3f414d" strokeWidth="2.5" d={"M16 10" + Array.from({ length: 62 }, (_, i) => `L${24 + i * 12} ${i % 2 ? 10 : 21}`).join("")} />
          {Array.from({ length: 15 }, (_, i) => (
            <g key={i} transform={`translate(${57 + i * 48.6} 40)`}>
              <rect width="13" height="14" fill="#565966" />
              <path stroke="#1f2029" strokeWidth="3" d="M3 3H9V10" />
            </g>
          ))}
        </svg>
        <div className="h-[61px] w-[440px] border-r-4 border-[#3b3d47] bg-[#4d5662]">
          <svg width="436" height="61" fill="none">
            <path fill="#5f6873" stroke="#3d434e" strokeWidth="2" d="M2 0H109V47Q109 54 102 54H8Q2 54 2 47ZM260 0H370V47Q370 54 363 54H267Q260 54 260 47Z" />
            <path fill="#c9c7ce" d="M17 24h3v20h-3zM40 24v20L22 34zM71 24L89 34L71 44zM91 24h3v20h-3z" />
            <circle cx="151" cy="35" r="29" fill="#4a0c2b" /><circle cx="151" cy="35" r="15" stroke="#c9c4cb" strokeWidth="7" />
            <circle cx="220" cy="35" r="27" fill="#aeacb2" stroke="#3d7578" strokeWidth="3" /><path fill="#54535a" d="M212 22L234 35L212 48Z" />
            <path fill="#c9c7ce" d="M277 25h20v20h-20zM332 25h8v20h-8zM345 25h8v20h-8z" />
            <path stroke="#e1e0e5" strokeWidth="7" d="M389 30Q402 15 418 27M420 40Q408 55 390 43" /><path fill="#e1e0e5" d="M424 17V33H408ZM385 53V37H401Z" />
          </svg>
        </div>
        <div className="flex min-w-0 flex-1 items-center bg-[#353437] text-[#a09ca4]">
          <Fit w={449} c="ml-[252px] font-['DejaVu_Sans_Mono'] text-[47px] leading-[50px] font-extralight">2.1.00 / 0:01.600</Fit>
          <Fit w={130} c="mt-[5px] ml-[121px] text-[32px]">[ STOPPED ]</Fit>
          <svg className="ml-[44px]" width="190" height="63" fill="none">
            <path fill="#4b4d58" d="M22 0H170V18L190 28L170 36V63H22V36L2 28L22 18Z" />
            <path stroke="#3b3c48" strokeWidth="3" d="M30 5H164M20 27H170M32 22L44 10L56 22L68 10L80 22L92 10L104 22L116 10L128 22L140 10L152 22L162 10" />
            {[40, 90, 138].map((x) => <g key={x}><rect x={x} y="38" width="13" height="14" fill="#5d606e" /><path stroke="#1f2029" strokeWidth="3" d={`M${x + 2} 40H${x + 10}V49`} /></g>)}
          </svg>
          <Fit w={236} c="ml-[8px] text-[43px] font-['DejaVu_Sans']">VERSION 6.30</Fit>
        </div>
      </div>
      <div className="h-[13px] shrink-0 bg-[#5b5b74]" />
    </>
  );
}

const CH = [
  { w: "w-[62px]", col: "bg-[#5c8a9a]" },
  { w: "w-[180px]", col: "bg-[#63969c]" },
  { w: "w-[180px]", col: "bg-[#4f8594]" },
  { w: "w-[209px]", col: "bg-[#4a9292]" },
  { w: "w-[181px]", col: "bg-[#6d9a6c]", fx: ["Serum", "ReaEQ"], fw: [54, 61] },
  { w: "w-[180px]", col: "bg-[#7f9a63]" },
  { w: "w-[181px]", col: "bg-[#47808e]" },
  { w: "w-[180px]", col: "bg-[#6b8dab]" },
  { w: "w-[180px]", col: "bg-[#958046]" },
  { w: "w-[180px]", col: "bg-[#948250]" },
  { w: "w-[180px]", col: "bg-[#a25f49]" },
  { w: "w-[180px]", col: "bg-[#8b8891]" },
  { w: "w-[181px]", col: "bg-[#a5a1a8]" },
  { w: "w-[179px]", col: "bg-[#b3afb5]", fx: ["ReaComp", "ReaSynDr"], fw: [86, 92] },
  { w: "w-[181px]", col: "bg-[#7a2a5e]" },
  { w: "w-[181px]", col: "bg-[#4d5a82]" },
  { w: "w-[181px]", col: "bg-[#8544a3]" },
];
function Mixer() {
  return (
    <div className="flex h-[253px] shrink-0 overflow-hidden border-t-[3px] border-[#29282c] bg-[#343437]">
      {CH.map((ch, i) => (
        <div key={i} className={"flex shrink-0 flex-col justify-end overflow-hidden " + ch.w}>
          <div className={"flex h-[250px] flex-col " + (i === 0 ? "-ml-[118px] w-[180px]" : "")}>
            <div className="flex">
              <div className="ml-[7px] flex min-w-0 flex-1 flex-col gap-[7px]">
                {[0, 1].map((k) => (
                  <div key={k} className={"flex h-[26px] items-center justify-center text-[20px] text-[#a9a5ab] " + (ch.fx ? "mr-[-2px] bg-linear-to-b from-[#47454a] to-[#3f3d42]" : "bg-[#313034]")}>
                    {ch.fx && <Fit w={ch.fw![k]} c="-ml-[4px]">{ch.fx[k]}</Fit>}
                  </div>
                ))}
              </div>
              <div className={"h-[86px] w-[5px] " + (ch.fx ? "mr-[6px] ml-[9px] bg-linear-to-b from-[#747177] to-[#57555a]" : "mr-[1px]")} />
            </div>
            <div className="mt-[-2px] ml-[50px] h-[4px] w-[78px] bg-[#3e3d41]" />
            <div className="mt-[8px] ml-[4px] flex h-[64px] justify-end bg-[#323135] pr-[12px]">
              <div className="flex w-[16px] flex-col gap-[13px] pt-[6px]">
                <i className="h-[20px] rounded-full border-[3px] border-[#3c3a3f]" />
                <i className="h-[20px] rounded-full border-[3px] border-[#3c3a3f]" />
              </div>
            </div>
            <div className={"mt-[35px] ml-[17px] flex h-[33px] w-[144px] items-center rounded-[4px] border-t-[3px] pr-[10px] pl-[10px] shadow-[0_3px_4px_#29282c] " + (ch.fx ? "border-[#5b595e] bg-linear-to-b from-[#4c4a4f] to-[#363439] text-[#bcb8be]" : "border-[#454348] bg-linear-to-b from-[#3f3d42] to-[#38363b] text-[#8a868c]")}>
              <Fit w={30} c="-mt-[3px] text-[24px] font-bold">FX</Fit>
              <i className={"-mt-[3px] ml-auto h-[20px] w-[8px] rounded-[3px] " + (ch.fx ? "bg-[#46ab63]" : "border-2 border-[#29272c]")} />
            </div>
          </div>
          <div className={"-mt-[5px] h-[6px] shrink-0 border-r-2 border-[#343437] " + ch.col} />
        </div>
      ))}
    </div>
  );
}

/* ---------- FX dialog ---------- */
function Check({ off, heavy }: { off?: boolean; heavy?: boolean }) {
  return (
    <svg width="28" height="28" className="shrink-0" fill="none">
      <rect x="1.5" y="1.5" width="25" height="25" fill="#fff" stroke={heavy ? "#2b2630" : "#56505a"} strokeWidth={heavy ? 3 : 2.2} />
      {!off && <path d={heavy ? "M6 13L12 18.5L22 7.5" : "M5 14L11 20L22.5 7"} stroke={heavy ? "#19151c" : "#4b4550"} strokeWidth={heavy ? 4.5 : 2.6} />}
    </svg>
  );
}
function Btn({ w, c, blue, children }: { w: number; c: string; blue?: boolean; children: ReactNode }) {
  return (
    <div className={"flex shrink-0 items-center justify-center bg-[#e6e0e7] " + (blue ? "border-4 border-[#3c82c0] " : "border-2 border-[#b7b0b9] ") + c}>
      <Fit w={w}>{children}</Fit>
    </div>
  );
}
const FX: [string, number][] = [
  ["JS: 4-Band EQ", 147], ["JS: 5-Band Splitter", 184], ["JS: Auto Looper", 161],
  ["JS: Delay w/Chorus", 198], ["VST: ReaDelay (ReaPlugs Edition...", 356], ["VST: ReaEQ (Cockos)", 227],
];

/* The plot's drawing space is 1341 x 756, squeezed into 975 x 252. */
const px = (x: number) => (x - 54) / 1.375;
const py = (y: number) => (y - 497) / 3;
const GRID = [145, 243, 364, 442, 546, 692, 842, 932, 1045, 1200, 1353];
const MINOR = [499, 583, 614, 644, 669, 995, 1085, 1119, 1148, 1177, 1220, 1240, 1258, 1274, 1289];
const FREQ: [number, string][] = [[138, "50"], [236, "100"], [358, "200"], [436, "300"], [540, "500"], [685, "1.0k"], [835, "2.0k"], [925, "3.0k"], [1037, "5.0k"], [1194, "10.0k"], [1346, "20.0k"]];
const BANDS: [number, number, string, string, string][] = [
  [145, 1068, "1", "#f3fb30", "#26241a"], [243, 881, "2", "#fff", "#18151a"], [364, 881, "3", "#fff", "#18151a"], [499, 881, "4", "#cf1130", "#59101c"],
  [644, 881, "5", "#fff", "#18151a"], [779, 881, "6", "#fff", "#18151a"], [932, 980, "7", "#fff", "#18151a"], [1045, 980, "8", "#fff", "#18151a"],
  [1119, 1068, "9", "none", "#a8a03a"], [1200, 980, "10", "#fff", "#18151a"], [1289, 846, "11", "#fff", "#18151a"],
];
const TAIL = "C80 1160 95 1050 118 910C130 820 145 768 164 768C180 768 200 805 240 832C300 858 330 862 380 868C450 876 480 880 546 882C640 886 700 888 760 902C800 908 830 925 850 945C880 975 910 1005 932 1010C950 1013 980 1010 1000 1022C1020 1030 1034 1040 1045 1038C1070 1020 1090 980 1140 975C1170 972 1200 978 1215 965C1240 935 1270 890 1300 876C1320 866 1350 878 1380 880";
function EqGraph() {
  return (
    <svg width="975" height="252" viewBox="0 0 975 252" className="block bg-black" fill="none" fontFamily="Liberation Sans">
      <g transform="scale(.72727 .33333) translate(-54 -497)">
        <path d={"M54 881V1253H68" + TAIL + "V881Z"} fill="#11685f" />
      </g>
      {GRID.map((x) => <path key={x} d={`M${px(x)} 0V252`} stroke={x === 692 ? "#807b80" : "#5b575c"} strokeWidth="2.5" opacity=".8" />)}
      {MINOR.map((x) => <path key={x} d={`M${px(x)} 0V228`} stroke="#454147" strokeWidth="2.5" opacity=".75" />)}
      <path d={`M${px(1379)} 0V252`} stroke="#9d999f" strokeWidth="3" />
      {[690, 880, 1069].map((y) => <path key={y} d={`M0 ${py(y)}H975`} stroke="#4c484d" strokeWidth="2.5" opacity=".8" />)}
      <g transform="scale(.72727 .33333) translate(-54 -497)">
        <path d={"M68 1253" + TAIL} stroke="#2fbfa6" strokeWidth="3.5" vectorEffect="non-scaling-stroke" />
        <path vectorEffect="non-scaling-stroke" strokeWidth="2.8" stroke="#92705f" d="M54 540C90 565 110 610 145 690C165 760 200 800 240 832C300 858 330 862 380 868C450 876 480 880 546 882C640 886 700 888 760 904C800 912 840 918 890 917C930 912 960 892 1010 886C1040 880 1050 864 1085 858C1130 854 1170 858 1200 852C1240 840 1270 844 1289 850C1320 870 1350 878 1380 880" />
      </g>
      <g fontSize="19" fill="#7b777d">
        <g textAnchor="end">{FREQ.map(([x, t]) => <text key={t} x={px(x)} y="247">{t}</text>)}</g>
        <text x="6" y="58">+6</text><text x="6" y="121">+0</text><text x="6" y="184">-6</text>
        <g fill="#45414a" textAnchor="end"><text x="972" y="58">-30</text><text x="972" y="121">-60</text><text x="972" y="184">-90</text></g>
      </g>
      {BANDS.map(([x, y, n, f, t]) => (
        <g key={n}>
          <circle cx={px(x)} cy={py(y)} r="13.5" fill={f} stroke={f === "none" ? t : "none"} strokeWidth="2.5" />
          <text x={px(x)} y={py(y) + 7} fontSize="21" textAnchor="middle" fill={t}>{n}</text>
        </g>
      ))}
    </svg>
  );
}

function Slider({ c, tick }: { c: string; tick?: boolean }) {
  return (
    <div className="relative ml-[21px] flex h-[41px] w-[464px] shrink-0 items-center bg-[#ece6ed]">
      <div className={"flex h-[37px] w-[40px] justify-center rounded-[5px] border-[3px] border-[#77727a] bg-linear-to-r from-[#fdfcfd] to-[#b9b4bb] shadow-[0_4px_4px_#bdb7c0] " + c}>
        <div className="h-full w-[3px] bg-[#6c6770]" />
      </div>
      {tick && <i className="absolute top-[3px] left-[322px] h-[37px] w-[3px] bg-[#3c3640]" />}
    </div>
  );
}
function Field({ w, c, children }: { w: number; c: string; children: ReactNode }) {
  return (
    <div className={"flex h-[49px] shrink-0 border-2 border-[#89828c] bg-white pt-[5px] pl-[6px] " + c}>
      <Fit w={w} c="h-[28px]">{children}</Fit>
    </div>
  );
}
const TABS = ["w-[85px]", "w-[88px]", "w-[88px]", "w-[92px]", "w-[85px]", "w-[88px]", "w-[88px]", "w-[88px]", "w-[88px]", "w-[88px]"];

function Dialog() {
  return (
    <div className="absolute top-[431px] left-[535px] flex h-[959px] w-[1545px] flex-col bg-[#f6f0f9] font-['Liberation_Sans'] text-[25px] leading-[28px] text-[#3c3640]">
      <div className="flex h-[64px] shrink-0 items-center bg-[#4f565f] pl-[16px]">
        <Fit w={247} c="font-['Open_Sans'] text-[25px] text-[#dcd8e0]">FX: Track 21 "Soldano"</Fit>
        <svg className="-mt-[4px] ml-[1145px]" width="28" height="34" fill="none"><path stroke="#e9e6ec" strokeWidth="3" d="M6 4H22M9 4V17M3 18H25M14 18V31" /><path fill="#e9e6ec" d="M15 4H20V17H15Z" /></svg>
        <div className="mt-[7px] ml-[68px] flex h-[38px] w-[38px] items-center justify-center bg-[#b73f55]">
          <svg width="12" height="12"><path d="M2 2L10 10M10 2L2 10" stroke="#f0dde2" strokeWidth="3" /></svg>
        </div>
      </div>
      <div className="flex h-[41px] shrink-0 items-center bg-white pl-[14px] pb-[2px] font-['Open_Sans'] text-[25px]">
        <Fit w={28}>FX</Fit><Fit w={43} c="ml-[28px]">Edit</Fit><Fit w={87} c="ml-[29px]">Options</Fit>
      </div>
      <div className="flex flex-1">
        <div className="ml-[6px] flex w-[421px] shrink-0 flex-col pt-[6px]">
          <div className="flex h-[747px] flex-col border-2 border-[#98919b] bg-white pt-[1px] pl-[13px]">
            {FX.map(([t, w], i) => (
              <div key={t} className={"flex shrink-0 items-center " + (i % 2 ? "h-[35px]" : "h-[36px]")}>
                <Check heavy />
                <div className={"ml-[9px] flex h-[34px] items-center pr-[9px] pl-[3px] pt-[2px] " + (i === 5 ? "bg-[#f4eef7]" : "")}><Fit w={w}>{t}</Fit></div>
              </div>
            ))}
          </div>
          <div className="mt-[9px] flex gap-[11px] pl-[1px]">
            <Btn w={43} c="h-[45px] w-[90px]" blue>Add</Btn>
            <Btn w={86} c="h-[45px] w-[102px]">Remove</Btn>
          </div>
          <Fit w={245} c="mt-[8px]">0.1%/0.5% CPU 0/0 spls</Fit>
        </div>
        <div className="ml-[12px] flex flex-1 flex-col pt-[5px]">
          <div className="flex h-[44px] items-center">
            <div className="h-[44px] w-[1056px] border-2 border-[#88818b] bg-white" />
            <div className="ml-[9px] flex h-[40px] w-[38px] items-end justify-center border-2 border-[#b7b0b9] bg-[#e6e0e7]"><Fit w={17} c="text-[20px]">...</Fit></div>
          </div>
          <div className="mt-[10px] flex h-[46px] items-center">
            <div className="ml-[5px] flex h-[46px] w-[637px] items-center border-2 border-[#c2bbc4] bg-[#e6e0e7] pl-[7px]">
              <Fit w={415}>stock - Basic 11 band BackGroundVocals</Fit>
              <svg className="ml-auto mr-[8px]" width="20" height="16" fill="none"><path d="M2 3L10 12L18 3" stroke="#77717a" strokeWidth="2.5" /></svg>
            </div>
            <Btn w={12} c="ml-[10px] h-[40px] w-[34px] text-[22px] font-bold">+</Btn>
            <Btn w={64} c="ml-[11px] h-[40px] w-[90px]">Param</Btn>
            <Btn w={92} c="ml-[10px] h-[40px] w-[153px]">2 in 2 out</Btn>
            <Btn w={22} c="ml-[11px] h-[40px] w-[50px]">UI</Btn>
            <svg className="ml-[10px]" width="36" height="38" fill="none"><circle cx="18" cy="19" r="15.5" stroke="#a39ca6" strokeWidth="3" fill="#f8f4fa" /><path d="M18 20L22 32" stroke="#55505a" strokeWidth="3" /></svg>
            <div className="ml-[8px]"><Check /></div>
          </div>
          <div className="mt-[8px] mb-[2px] flex items-center">
            <div className="h-[2px] w-[15px]" />
            <Fit w={72} c="ml-[4px]">ReaEQ</Fit>
            <div className="ml-[6px] h-[2px] w-[996px] bg-[#e0d9e3]" />
          </div>
          <div className="flex h-[695px] w-[1097px] border-x-2 border-b-2 border-[#e0d9e3]">
            <div className="ml-[22px] flex w-[985px] flex-col pt-[7px]">
              <div className="ml-[1px]"><EqGraph /></div>
              <div className="mt-[18px] ml-[11px] flex h-[43px] items-end">
                {TABS.map((w, i) => (
                  <div key={i} className={"flex shrink-0 items-center border-[#ddd6e0] " + w + (i === 3 ? " h-[43px] bg-white pb-[5px] pl-[14px]" : " h-[39px] border-t-2 pb-[3px]" + (i === 0 ? " pl-[11px]" : i === 4 ? " pl-[11px]" : " pl-[14px]") + (i === 2 ? "" : " border-r-2"))}>
                    <Fit w={i === 9 ? 27 : 13} c="text-[27px]">{i + 1}</Fit>
                  </div>
                ))}
                <div className="mb-[7px] ml-[14px] flex h-[34px] w-[68px]">
                  <div className="flex flex-1 items-center justify-center border-2 border-[#a39ca6] bg-[#efe9f0]"><svg width="8" height="12"><path d="M8 0V12L0 6Z" fill="#19151c" /></svg></div>
                  <div className="-ml-[2px] flex flex-1 items-center justify-center border-2 border-[#a39ca6] bg-[#efe9f0]"><svg width="8" height="12"><path d="M0 0V12L8 6Z" fill="#19151c" /></svg></div>
                </div>
              </div>
              <div className="ml-[7px] flex h-[301px] w-[962px] flex-col border-r-2 border-b-2 border-[#ddd6e0] bg-white">
                <div className="mt-[27px] flex h-[28px] items-center">
                  <div className="ml-[27px]"><Check /></div>
                  <Fit w={83} c="ml-[7px]">Enabled</Fit>
                  <Fit w={53} c="mt-[4px] ml-[54px]">Type:</Fit>
                  <div className="ml-[322px]"><Check off /></div>
                  <Fit w={329} c="ml-[7px]">Log-scale automated frequencies</Fit>
                </div>
                <div className="mt-[19px] flex h-[49px] items-center">
                  <Fit w={155} c="ml-[31px]">Frequency (Hz):</Fit>
                  <Slider c="ml-[142px]" tick />
                  <Field w={56} c="ml-[9px] w-[111px]">400.0</Field>
                  <Field w={30} c="ml-[6px] w-[111px]">G4</Field>
                </div>
                <div className="mt-[10px] flex h-[49px] items-center">
                  <Fit w={95} c="ml-[91px]">Gain (dB):</Fit>
                  <Slider c="ml-[303px]" />
                  <Field w={32} c="ml-[9px] w-[111px]">0.0</Field>
                </div>
                <div className="mt-[10px] flex h-[49px] items-center">
                  <Fit w={158} c="ml-[31px]">Bandwidth (oct):</Fit>
                  <div className="-ml-[3px]"><Slider c="ml-[202px]" /></div>
                  <Field w={42} c="ml-[9px] w-[111px]">1.91</Field>
                </div>
              </div>
              <div className="mt-[11px] ml-[7px] flex h-[45px] items-center whitespace-nowrap">
                <Btn w={98} c="h-[45px] w-[141px]">Add band</Btn>
                <Btn w={141} c="ml-[10px] h-[45px] w-[164px]">Remove band</Btn>
                <Btn w={143} c="ml-[12px] h-[45px] w-[192px]">Reset defaults</Btn>
                <div className="ml-[13px]"><Check /></div><Fit w={105} c="ml-[7px]">Show tabs</Fit>
                <div className="ml-[23px]"><Check /></div><Fit w={99} c="ml-[7px]">Show grid</Fit>
                <div className="ml-[23px]"><Check /></div><Fit w={123} c="ml-[7px]">Show phase</Fit>
              </div>
            </div>
            <div className="flex w-[86px] flex-col pt-[8px]">
              <Fit w={50} c="ml-[10px]">Gain:</Fit>
              <div className="mt-[10px] ml-[11px] flex h-[518px] w-[41px] justify-center bg-[#ede7ee]">
                <div className="mt-[135px] flex h-[43px] w-[35px] items-center rounded-[5px] border-[3px] border-[#77727a] bg-linear-to-b from-[#fdfcfd] to-[#b5b0b8] shadow-[0_5px_4px_#bdb7c0]"><div className="h-[3px] w-full bg-[#6c6770]" /></div>
              </div>
              <div className="mt-[11px] ml-[1px] flex h-[49px] w-[70px] items-center justify-center border-2 border-[#89828c] bg-white pb-[5px]"><Fit w={32}>0.0</Fit></div>
            </div>
          </div>
        </div>
      </div>
      <svg className="absolute top-[321px] left-[258px]" width="30" height="42" fill="#fff"><path d="M2 2V34L9 28L15 39L21 36L16 25L25 24Z" stroke="#6d6772" strokeWidth="2.6" /></svg>
    </div>
  );
}

export default function App() {
  return (
    <div className="relative h-[1800px] w-[2880px] overflow-hidden bg-black pt-[90px] font-['Liberation_Sans']">
      <div className="flex h-[1620px] flex-col overflow-hidden">
        <div className="flex h-[13px] shrink-0 items-start overflow-hidden bg-[#fbf6fb] text-[25px] leading-[28px] text-[#5c5660]">
          <div className="-mt-[22px] flex">
            <Fit w={86} c="ml-[64px]">Options</Fit><Fit w={76} c="ml-[30px]">Actions</Fit><Fit w={115} c="ml-[36px]">Extensions</Fit><Fit w={52} c="ml-[34px]">Help</Fit><Fit w={380} c="ml-[50px]">[Change tempo master to 66 bpm]</Fit>
          </div>
        </div>
        <TopToolbar />
        <PluginBar />
        <div className="flex h-[137px] shrink-0 bg-[#5a5b6e]">
          <ReaperPanel />
          <Ruler />
        </div>
        <Arrange />
        <Transport />
        <Mixer />
      </div>
      <Dialog />
      <div className="absolute top-[90px] right-0 h-[1620px] w-[5px] bg-linear-to-r from-transparent to-black/80" />
      <div className="absolute top-[90px] left-0 h-[1620px] w-[5px] bg-linear-to-l from-transparent to-black/60" />
    </div>
  );
}
